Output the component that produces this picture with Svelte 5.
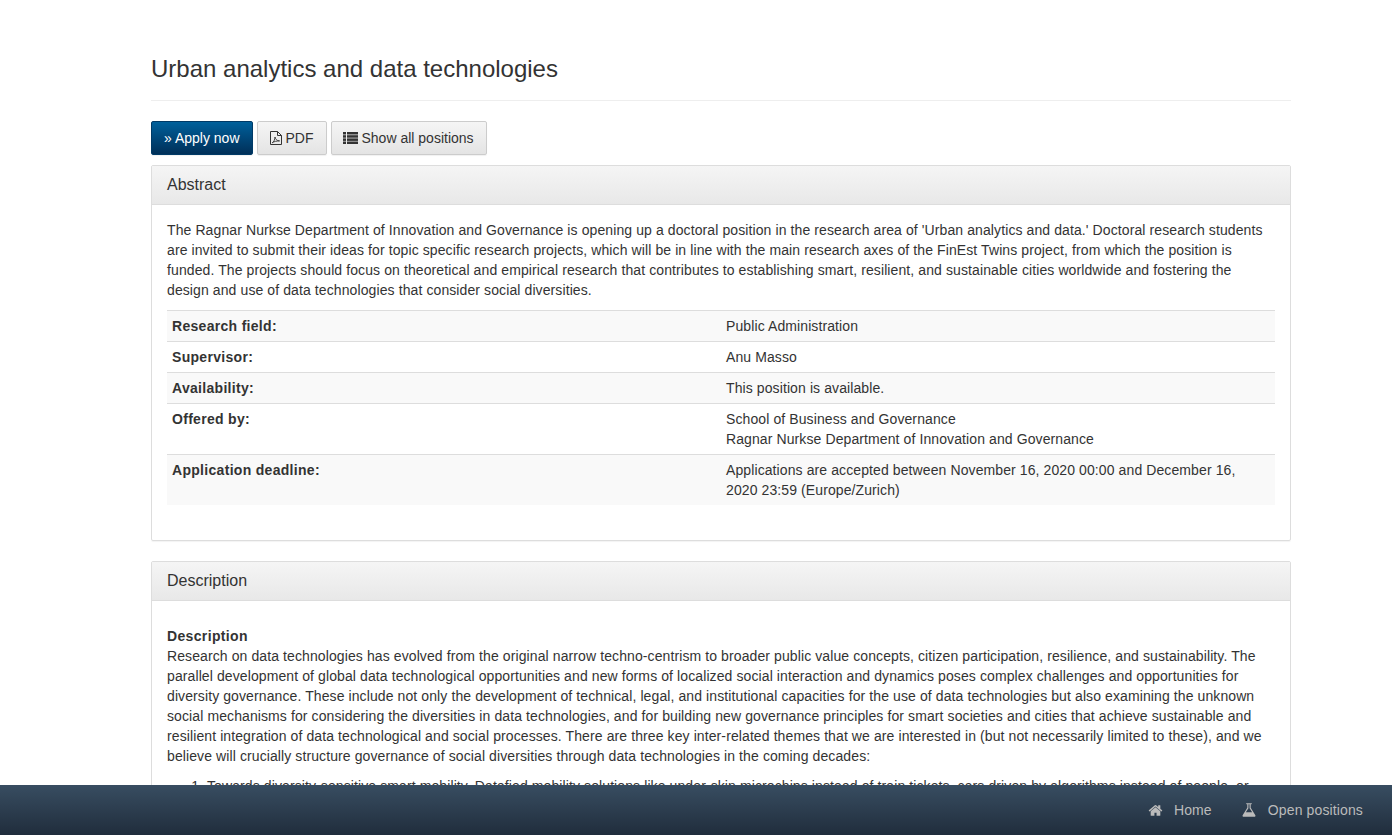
<script>
  const details = [
    { label: 'Research field:', lines: ['Public Administration'] },
    { label: 'Supervisor:', lines: ['Anu Masso'] },
    { label: 'Availability:', lines: ['This position is available.'] },
    { label: 'Offered by:', lines: ['School of Business and Governance', 'Ragnar Nurkse Department of Innovation and Governance'] },
    { label: 'Application deadline:', lines: ['Applications are accepted between November 16, 2020 00:00 and December 16, 2020 23:59 (Europe/Zurich)'] }
  ];
</script>

<div class="page">
  <h1>Urban analytics and data technologies</h1>

  <div class="actions">
    <a class="btn primary" href="#apply">» Apply now</a>
    <a class="btn" href="#pdf">
      <svg class="icon" width="12" height="14" viewBox="0 0 12 14" fill="none" stroke="currentColor">
        <path d="M.5.5h7l4 4v9h-11z" />
        <path d="M7.500.5v4h4" />
        <path d="M2.200 11.800c1.600-.8 2.600-3 2.800-5.800.6 2.400 1.800 3.800 4.600 3.900-2.800.1-5.600.5-7.400 1.900z" stroke-width=".9" />
      </svg>
      PDF
    </a>
    <a class="btn" href="#all">
      <svg class="icon list" width="15" height="12" viewBox="0 0 15 12" fill="currentColor">
        <rect y="0" width="3" height="2.500" /><rect x="4" y="0" width="11" height="2.500" />
        <rect y="3.200" width="3" height="2.500" /><rect x="4" y="3.200" width="11" height="2.500" />
        <rect y="6.400" width="3" height="2.500" /><rect x="4" y="6.400" width="11" height="2.500" />
        <rect y="9.500" width="3" height="2.500" /><rect x="4" y="9.500" width="11" height="2.500" />
      </svg>
      Show all positions
    </a>
  </div>

  <section class="panel">
    <div class="panel-heading">Abstract</div>
    <div class="panel-body">
      <p>The Ragnar Nurkse Department of Innovation and Governance is opening up a doctoral position in the research area of 'Urban analytics and data.' Doctoral research students are invited to submit their ideas for topic specific research projects, which will be in line with the main research axes of the FinEst Twins project, from which the position is funded. The projects should focus on theoretical and empirical research that contributes to establishing smart, resilient, and sustainable cities worldwide and fostering the design and use of data technologies that consider social diversities.</p>
      <table>
        <tbody>
          {#each details as row}
            <tr>
              <th>{row.label}</th>
              <td>
                {#each row.lines as line}
                  <div>{line}</div>
                {/each}
              </td>
            </tr>
          {/each}
        </tbody>
      </table>
    </div>
  </section>

  <section class="panel">
    <div class="panel-heading">Description</div>
    <div class="panel-body">
      <p class="intro"><strong>Description</strong><br />Research on data technologies has evolved from the original narrow techno-centrism to broader public value concepts, citizen participation, resilience, and sustainability. The parallel development of global data technological opportunities and new forms of localized social interaction and dynamics poses complex challenges and opportunities for diversity governance. These include not only the development of technical, legal, and institutional capacities for the use of data technologies but also examining the unknown social mechanisms for considering the diversities in data technologies, and for building new governance principles for smart societies and cities that achieve sustainable and resilient integration of data technological and social processes. There are three key inter-related themes that we are interested in (but not necessarily limited to these), and we believe will crucially structure governance of social diversities through data technologies in the coming decades:</p>
      <ol>
        <li>Towards diversity-sensitive smart mobility. Datafied mobility solutions like under-skin microchips instead of train tickets, cars driven by algorithms instead of people, or</li>
      </ol>
    </div>
  </section>
</div>

<footer>
  <a class="home" href="#home">
    <svg width="15" height="15" viewBox="0 0 1792 1792" fill="currentColor">
      <path d="M1472 992v480q0 26-19 45t-45 19h-384v-384h-256v384h-384q-26 0-45-19t-19-45v-480q0-1 .5-3t.5-3l575-474 575 474q1 2 1 6zm223-69l-62 74q-8 9-21 11h-3q-13 0-21-7l-692-577-692 577q-12 8-24 7-13-2-21-11l-62-74q-8-10-7-23.500t11-21.500l719-599q32-26 76-26t76 26l244 204v-195q0-14 9-23t23-9h192q14 0 23 9t9 23v408l219 182q10 8 11 21.500t-7 23.500z" />
    </svg>
    Home
  </a>
  <a href="#positions">
    <svg width="16" height="16" viewBox="0 0 1792 1792" fill="currentColor">
      <path d="M1591 1448q56 89 21.500 152.500t-140.500 63.500h-1152q-106 0-140.500-63.500t21.500-152.500l503-793v-399h-64q-26 0-45-19t-19-45 19-45 45-19h512q26 0 45 19t19 45-19 45-45 19h-64v399zm-779-725l-272 429h712l-272-429-20-31v-436h-128v436z" />
    </svg>
    Open positions
  </a>
</footer>

<style>
  :global(body) {
    font-family: "Liberation Sans", Arial, sans-serif;
    font-size: 14px;
    line-height: 20px;
    letter-spacing: 0.1px;
    color: #333;
    background: #fff;
    overflow: hidden;
  }

  .page {
    width: 1140px;
    margin-left: 151px;
    height: 835px;
    overflow: hidden;
  }

  h1 {
    margin: 0 0 20px;
    padding: 55px 0 17px;
    border-bottom: 1px solid #eee;
    font-size: 24px;
    font-weight: 500;
    line-height: 28px;
    letter-spacing: 0;
  }

  .actions {
    display: flex;
    gap: 4px;
    margin-bottom: 10px;
  }

  .btn {
    display: flex;
    align-items: center;
    gap: 4px;
    height: 34px;
    box-sizing: border-box;
    padding: 6px 12px;
    border: 1px solid #ccc;
    border-radius: 2px;
    background: linear-gradient(#f5f5f5, #e4e4e4);
    box-shadow: 0 1px 1px rgba(0, 0, 0, 0.06);
    color: #333;
    letter-spacing: 0;
    text-decoration: none;
  }

  .btn.primary {
    border-color: #003a66;
    background: linear-gradient(#00609b, #002f58);
    color: #fff;
  }

  .list {
    margin-left: -1px;
  }

  .panel {
    margin-bottom: 20px;
    border: 1px solid #ddd;
    border-radius: 2px;
    box-shadow: 0 1px 1px rgba(0, 0, 0, 0.05);
  }

  .panel-heading {
    padding: 10px 15px;
    border-bottom: 1px solid #ddd;
    background: linear-gradient(#f5f5f5, #e8e8e8);
    font-size: 16px;
    line-height: 18px;
    letter-spacing: 0;
  }

  .panel-body {
    padding: 15px;
  }

  p {
    margin: 0 0 10px;
  }

  .intro {
    margin-top: 10px;
  }

  strong {
    letter-spacing: 0.35px;
  }

  table {
    width: 100%;
    margin-bottom: 20px;
    border-collapse: collapse;
    table-layout: fixed;
  }

  tr:nth-child(odd) {
    background: #f9f9f9;
  }

  th,
  td {
    padding: 5px;
    border-top: 1px solid #ddd;
    text-align: left;
    vertical-align: top;
  }

  th {
    font-weight: 700;
    letter-spacing: 0.3px;
  }

  ol {
    margin: 0 0 10px;
    padding-left: 40px;
  }

  footer {
    position: fixed;
    left: 0;
    right: 0;
    bottom: 0;
    display: flex;
    justify-content: flex-end;
    align-items: center;
    gap: 29px;
    height: 50px;
    padding-right: 29px;
    background: linear-gradient(#384d61, #202d3c);
  }

  footer a {
    display: flex;
    align-items: center;
    gap: 11px;
    color: #bbb;
    letter-spacing: 0.13px;
    text-decoration: none;
  }
</style>
